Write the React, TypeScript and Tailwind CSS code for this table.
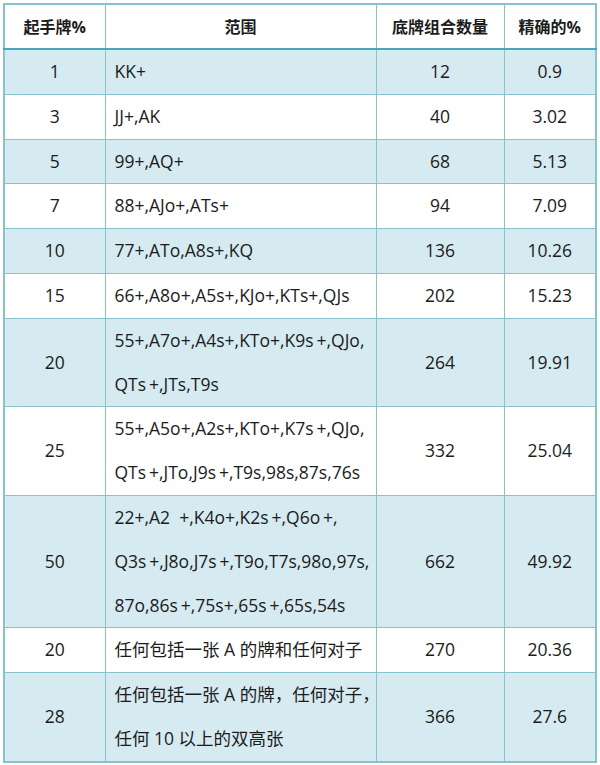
const ROWS = [
  { pct: '1', range: ['KK+'], combos: '12', exact: '0.9' },
  { pct: '3', range: ['JJ+,AK'], combos: '40', exact: '3.02' },
  { pct: '5', range: ['99+,AQ+'], combos: '68', exact: '5.13' },
  { pct: '7', range: ['88+,AJo+,ATs+'], combos: '94', exact: '7.09' },
  { pct: '10', range: ['77+,ATo,A8s+,KQ'], combos: '136', exact: '10.26' },
  { pct: '15', range: ['66+,A8o+,A5s+,KJo+,KTs+,QJs'], combos: '202', exact: '15.23' },
  { pct: '20', range: ['55+,A7o+,A4s+,KTo+,K9s\u2009+,QJo,', 'QTs\u2009+,JTs,T9s'], combos: '264', exact: '19.91' },
  { pct: '25', range: ['55+,A5o+,A2s+,KTo+,K7s\u2009+,QJo,', 'QTs\u2009+,JTo,J9s\u2009+,T9s,98s,87s,76s'], combos: '332', exact: '25.04' },
  {
    pct: '50',
    range: ['22+,A2\u00a0\u00a0+,K4o+,K2s\u2009+,Q6o\u2009+,', 'Q3s\u2009+,J8o,J7s\u2009+,T9o,T7s,98o,97s,', '87o,86s\u2009+,75s+,65s\u2009+,65s,54s'],
    combos: '662',
    exact: '49.92',
  },
  { pct: '20', range: ['任何包括一张 A 的牌和任何对子'], combos: '270', exact: '20.36' },
  { pct: '28', range: ['任何包括一张 A 的牌，任何对子，', '任何 10 以上的双高张'], combos: '366', exact: '27.6' },
]

export default function App() {
  return (
    <div className="w-[600px] h-[765px] bg-white pt-[3px] pl-[3px]" style={{ fontFamily: '"Open Sans", "Noto Sans CJK SC", sans-serif' }}>
      <table className="table-fixed w-[594px] border-collapse text-[#1c1c1c] border-2 border-[#86c3cd]">
        <thead>
          <tr className="bg-white border-b-2 border-[#4aa6bd]">
            <th className="w-[101px] h-[45px] border border-[#86c3cd] text-[16px] font-bold">起手牌%</th>
            <th className="w-[271px] border border-[#86c3cd] text-[16px] font-bold">范围</th>
            <th className="w-[128px] border border-[#86c3cd] text-[16px] font-bold">底牌组合数量</th>
            <th className="w-[92px] border border-[#86c3cd] text-[16px] font-bold">精确的%</th>
          </tr>
        </thead>
        <tbody>
          {ROWS.map((r, i) => (
            <tr key={i} className={i % 2 === 0 ? 'bg-[#d5eaf1]' : 'bg-white'}>
              <td className="border border-[#86c3cd] text-center text-[17.5px] leading-[43.8px]">{r.pct}</td>
              <td className="border border-[#86c3cd] pl-[9px] text-[17.5px] leading-[43.8px] whitespace-nowrap overflow-visible">
                {r.range.map((line, j) => (
                  <div key={j}>{line}</div>
                ))}
              </td>
              <td className="border border-[#86c3cd] text-center text-[17.5px] leading-[43.8px]">{r.combos}</td>
              <td className="border border-[#86c3cd] text-center text-[17.5px] leading-[43.8px]">{r.exact}</td>
            </tr>
          ))}
        </tbody>
      </table>
    </div>
  )
}
